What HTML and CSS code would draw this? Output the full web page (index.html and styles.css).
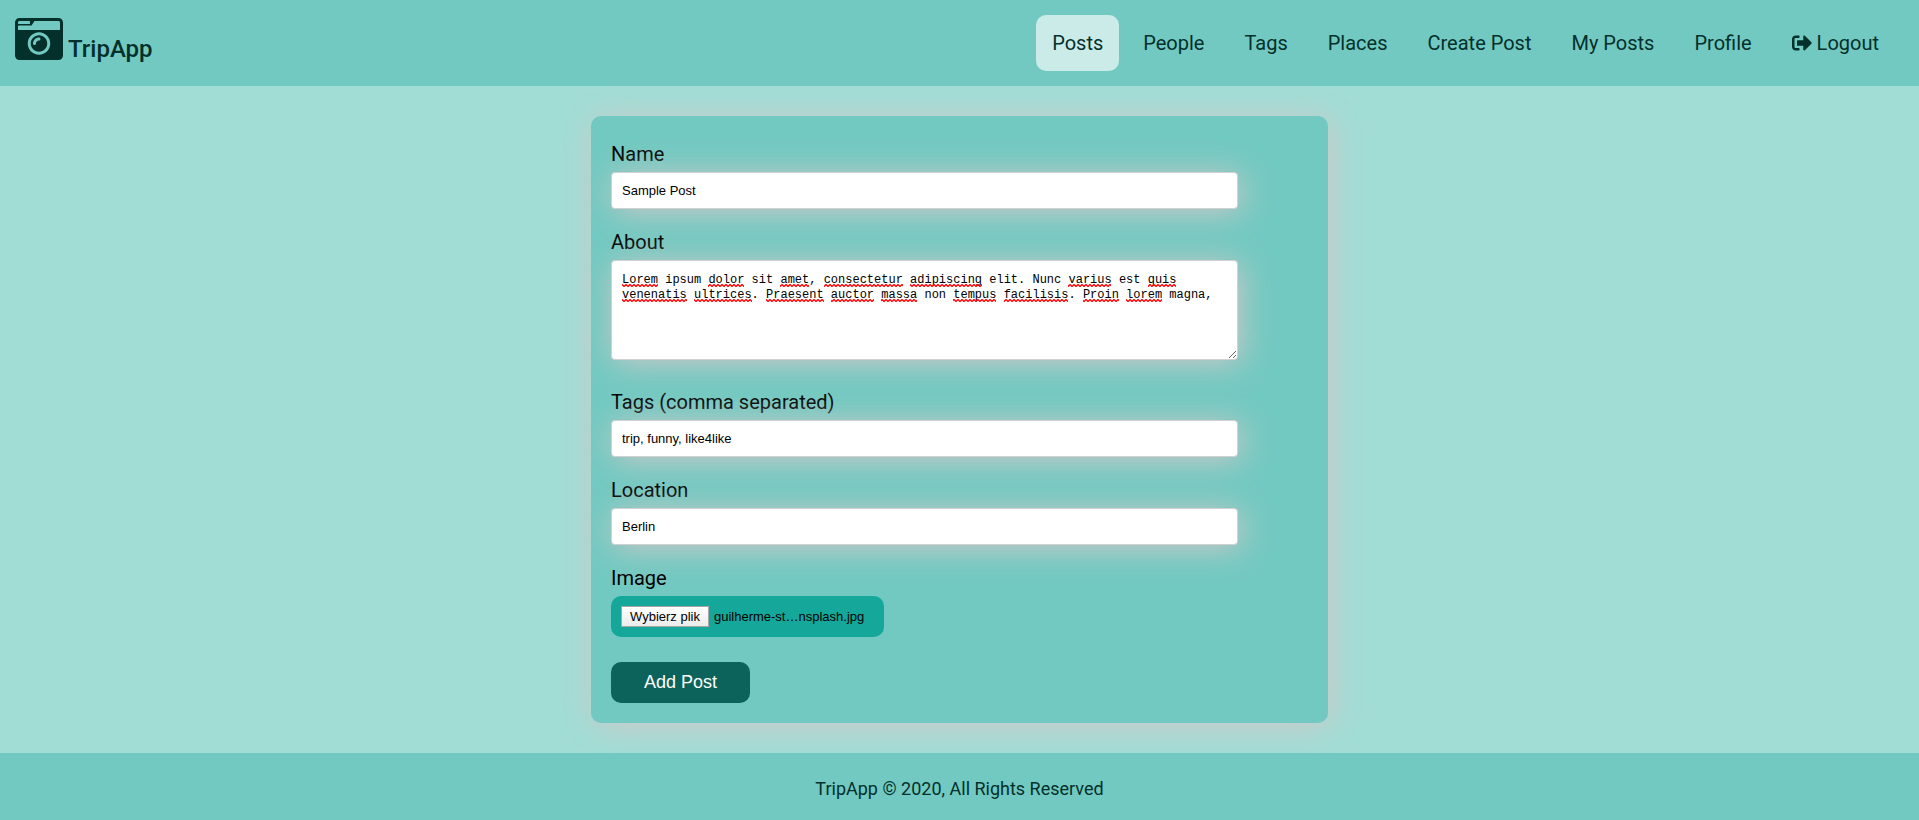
FILE: index.html
```html
<!DOCTYPE html>
<html lang="en">
<head>
  <meta charset="utf-8">
  <meta name="viewport" content="width=device-width, initial-scale=1">
  <title>TripApp</title>
  <link rel="stylesheet" href="styles.css">
</head>
<body>
  <header class="header">
    <a class="logo" href="#">
      <svg class="logo-icon" viewBox="0 0 512 512" aria-hidden="true"><path d="M48 32C21.500 32 0 53.500 0 80v352c0 26.500 21.500 48 48 48h416c26.500 0 48-21.500 48-48V80c0-26.500-21.500-48-48-48H48zm0 32h106c3.300 0 6 2.700 6 6v20c0 3.300-2.700 6-6 6H38c-3.300 0-6-2.700-6-6V80c0-8.800 7.200-16 16-16zm426 96H38c-3.300 0-6-2.700-6-6v-36c0-3.300 2.700-6 6-6h138l30.200-45.300c1.100-1.700 3-2.700 5-2.700H464c8.800 0 16 7.200 16 16v74c0 3.300-2.700 6-6 6zM256 424c-66.200 0-120-53.800-120-120s53.800-120 120-120 120 53.800 120 120-53.800 120-120 120zm0-208c-48.500 0-88 39.500-88 88s39.500 88 88 88 88-39.500 88-88-39.500-88-88-88zm-48 104c-8.800 0-16-7.200-16-16 0-35.300 28.700-64 64-64 8.800 0 16 7.200 16 16s-7.200 16-16 16c-17.600 0-32 14.400-32 32 0 8.800-7.200 16-16 16z"/></svg>
      <span class="logo-text">TripApp</span>
    </a>
    <nav class="nav">
      <a class="nav-link active" href="#">Posts</a>
      <a class="nav-link" href="#">People</a>
      <a class="nav-link" href="#">Tags</a>
      <a class="nav-link" href="#">Places</a>
      <a class="nav-link" href="#">Create Post</a>
      <a class="nav-link" href="#">My Posts</a>
      <a class="nav-link" href="#">Profile</a>
      <a class="nav-link" href="#"><svg class="nav-icon" viewBox="0 0 512 512" aria-hidden="true"><path d="M497 273L329 441c-15 15-41 4.500-41-17v-96H152c-13.300 0-24-10.700-24-24v-96c0-13.300 10.700-24 24-24h136V88c0-21.400 25.900-32 41-17l168 168c9.300 9.400 9.300 24.600 0 34zM192 436v-40c0-6.600-5.400-12-12-12H96c-17.700 0-32-14.300-32-32V160c0-17.700 14.300-32 32-32h84c6.600 0 12-5.400 12-12V76c0-6.600-5.400-12-12-12H96c-53 0-96 43-96 96v192c0 53 43 96 96 96h84c6.600 0 12-5.400 12-12z"/></svg>Logout</a>
    </nav>
  </header>

  <main class="main">
    <form class="card">
      <div class="field">
        <label class="label" for="name">Name</label>
        <input class="control" id="name" type="text" value="Sample Post">
      </div>
      <div class="field field-about">
        <label class="label" for="about">About</label>
        <div class="editor">
          <textarea class="control area" id="about" spellcheck="false">Lorem ipsum dolor sit amet, consectetur adipiscing elit. Nunc varius est quis venenatis ultrices. Praesent auctor massa non tempus facilisis. Proin lorem magna,</textarea>
          <svg class="spelling" aria-hidden="true">
            <defs>
              <pattern id="wave" width="4" height="3" patternUnits="userSpaceOnUse">
                <path d="M-1 1.500 L0 .5 L2 2.500 L4 .5 L5 1.500" fill="none" stroke="#f00" stroke-width="1.300"/>
              </pattern>
            </defs>
            <g fill="url(#wave)">
              <rect x="0" y="12" width="36" height="3"/>
              <rect x="86" y="12" width="36" height="3"/>
              <rect x="158" y="12" width="29" height="3"/>
              <rect x="202" y="12" width="79" height="3"/>
              <rect x="288" y="12" width="72" height="3"/>
              <rect x="446" y="12" width="43" height="3"/>
              <rect x="526" y="12" width="28" height="3"/>
              <rect x="0" y="27" width="65" height="3"/>
              <rect x="72" y="27" width="58" height="3"/>
              <rect x="144" y="27" width="58" height="3"/>
              <rect x="209" y="27" width="43" height="3"/>
              <rect x="259" y="27" width="36" height="3"/>
              <rect x="331" y="27" width="43" height="3"/>
              <rect x="382" y="27" width="64" height="3"/>
              <rect x="461" y="27" width="36" height="3"/>
              <rect x="504" y="27" width="36" height="3"/>
            </g>
          </svg>
        </div>
      </div>
      <div class="field">
        <label class="label" for="tags">Tags (comma separated)</label>
        <input class="control" id="tags" type="text" value="trip, funny, like4like">
      </div>
      <div class="field">
        <label class="label" for="location">Location</label>
        <input class="control" id="location" type="text" value="Berlin">
      </div>
      <div class="field field-image">
        <label class="label" for="image">Image</label>
        <div class="file">
          <input class="file-input" id="image" type="file" accept="image/*">
          <label class="file-button" for="image">Wybierz plik</label>
          <span class="file-name">guilherme-st…nsplash.jpg</span>
        </div>
      </div>
      <button class="submit" type="submit">Add Post</button>
    </form>
  </main>

  <footer class="footer">TripApp © 2020, All Rights Reserved</footer>
</body>
</html>
```
FILE: styles.css
```css
* {
  box-sizing: border-box;
}

body {
  margin: 0;
  min-height: 100vh;
  display: flex;
  flex-direction: column;
  background: #a1dcd5;
  color: #04302b;
  font-family: Roboto, "Liberation Sans", sans-serif;
  font-size: 20px;
  font-weight: 400;
}

a {
  color: inherit;
  text-decoration: none;
}

.header {
  display: flex;
  align-items: center;
  justify-content: space-between;
  padding: 15px 24px 15px 15px;
  background: #72c9c1;
}

.logo {
  display: flex;
  align-items: flex-start;
  gap: 5px;
  height: 56px;
}

.logo-icon {
  width: 48px;
  height: 48px;
  fill: currentColor;
}

.logo-text {
  padding-top: 19px;
  font-size: 24px;
  font-weight: 500;
  line-height: 30px;
}

.nav {
  display: flex;
  gap: 8px;
}

.nav-link {
  display: flex;
  align-items: center;
  gap: 5px;
  padding: 16px;
  border-radius: 10px;
  line-height: 24px;
}

.nav-link.active {
  background: #cbebe8;
}

.nav-icon {
  width: 20px;
  height: 20px;
  fill: currentColor;
}

.main {
  flex: 1;
  display: flex;
  justify-content: center;
  align-items: flex-start;
  padding: 30px 20px;
  overflow: hidden;
}

.card {
  display: flex;
  flex-direction: column;
  align-items: flex-start;
  width: 100%;
  max-width: 737px;
  padding: 20px;
  border-radius: 10px;
  background: #72c9c1;
  box-shadow: 3px 3px 32px #d1c8c8;
  color: #000;
}

.field {
  display: flex;
  flex-direction: column;
  align-items: flex-start;
  width: 90%;
  margin-bottom: 15px;
}

.field-about {
  margin-bottom: 24px;
}

.field-image {
  margin-bottom: 25px;
}

.label {
  line-height: 36px;
}

.control {
  display: block;
  width: 100%;
  height: 37px;
  padding: 10px;
  border: 1px solid #d1d1d1;
  border-radius: 4px;
  background: #fff;
  box-shadow: 3px 3px 32px #d1c8c8;
  color: #000;
  font-family: "Liberation Sans", Arial, sans-serif;
  font-size: 13px;
}

.editor {
  position: relative;
  width: 100%;
}

.area {
  height: 100px;
  padding: 12px 10px;
  font-family: "Liberation Mono", Consolas, monospace;
  font-size: 12px;
  line-height: 15px;
  resize: vertical;
}

.spelling {
  position: absolute;
  top: 12px;
  left: 11px;
  width: calc(100% - 22px);
  height: 32px;
  pointer-events: none;
}

.file {
  display: flex;
  align-items: center;
  gap: 5px;
  min-width: 273px;
  padding: 10px;
  border-radius: 10px;
  background: #15a79a;
  font-family: "Liberation Sans", Arial, sans-serif;
  font-size: 13px;
  line-height: 19px;
}

.file-input {
  position: absolute;
  width: 1px;
  height: 1px;
  opacity: 0;
}

.file-button {
  padding: 0 8px;
  border: 1px solid #a6a6a6;
  background: linear-gradient(#fff, #ececec);
  line-height: 19px;
}

.submit {
  padding: 10px 33px;
  border: 0;
  border-radius: 10px;
  background: #0c635b;
  color: #fff;
  font-family: "Liberation Sans", Arial, sans-serif;
  font-size: 18px;
  line-height: 21px;
}

.footer {
  padding: 24px 20px 20px;
  background: #72c9c1;
  font-size: 18px;
  line-height: 23px;
  text-align: center;
}
```
